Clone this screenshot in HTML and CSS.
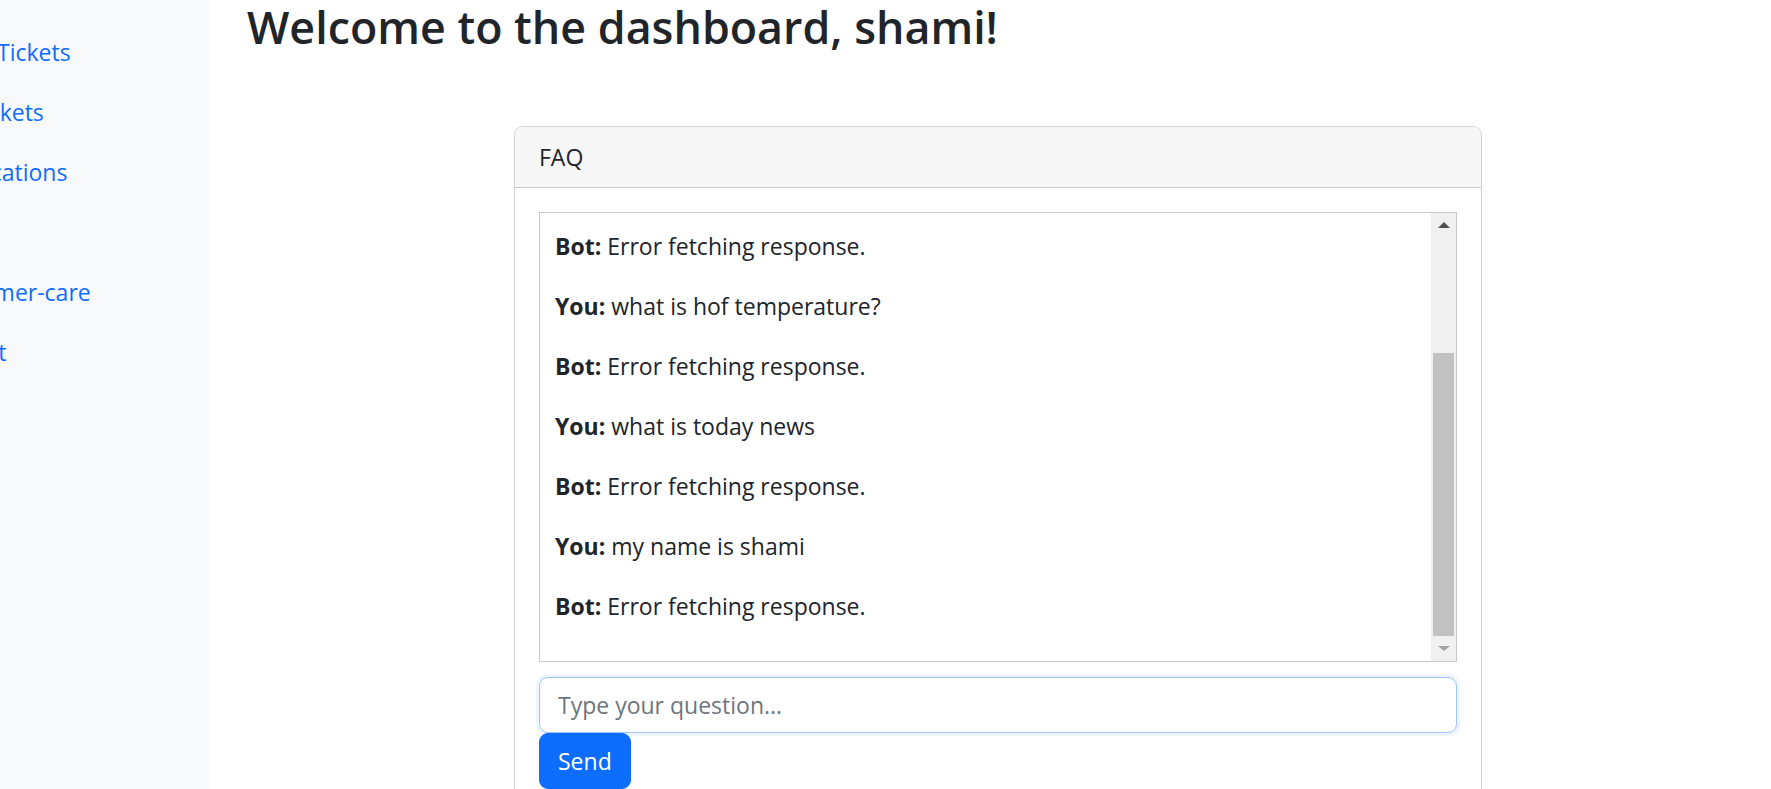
FILE: index.html
```html
<!DOCTYPE html>
<html lang="en">
<head>
<meta charset="utf-8">
<title>Dashboard</title>
<link rel="stylesheet" href="styles.css">
</head>
<body>
<div class="layout">
  <aside class="sidebar">
    <nav class="side-nav">
      <a href="#" class="side-link">Open Tickets</a>
      <a href="#" class="side-link">My Tickets</a>
      <a href="#" class="side-link">Notifications</a>
      <a href="#" class="side-link">FAQ</a>
      <a href="#" class="side-link">Customer-care</a>
      <a href="#" class="side-link">Logout</a>
    </nav>
  </aside>
  <main class="main">
    <h1 class="title">Welcome to the dashboard, shami!</h1>
    <section class="card">
      <div class="card-header">FAQ</div>
      <div class="card-body">
        <div class="chat">
          <div class="chat-viewport">
            <p class="msg"><strong>Bot:</strong> Error fetching response.</p>
            <p class="msg"><strong>You:</strong> what is hof temperature?</p>
            <p class="msg"><strong>Bot:</strong> Error fetching response.</p>
            <p class="msg"><strong>You:</strong> what is today news</p>
            <p class="msg"><strong>Bot:</strong> Error fetching response.</p>
            <p class="msg"><strong>You:</strong> my name is shami</p>
            <p class="msg"><strong>Bot:</strong> Error fetching response.</p>
          </div>
          <div class="scrollbar" aria-hidden="true">
            <div class="sb-btn"><span class="arrow-up"></span></div>
            <div class="sb-track"><div class="sb-thumb"></div></div>
            <div class="sb-btn"><span class="arrow-down"></span></div>
          </div>
        </div>
        <input class="question" type="text" placeholder="Type your question...">
        <button class="send-btn" type="button">Send</button>
      </div>
    </section>
  </main>
</div>
</body>
</html>
```
FILE: styles.css
```css
html, body {
  margin: 0;
  overflow: hidden;
}

body {
  font-family: "Open Sans", "Noto Sans", sans-serif;
  font-size: 23px;
  line-height: 36px;
  color: #212529;
  background: #fff;
}

.layout {
  display: flex;
  min-height: 100vh;
}

.sidebar {
  width: 209px;
  flex: none;
  background: #f8f9fa;
  overflow: hidden;
  padding-top: 22px;
}

.side-nav {
  display: flex;
  flex-direction: column;
  margin-left: -92px;
}

.side-link {
  display: block;
  padding: 12px 24px;
  color: #0d6efd;
  text-decoration: none;
  white-space: nowrap;
}

.main {
  flex: 1;
  padding-left: 38px;
}

.title {
  margin: 0 0 12px;
  font-size: 44.8px;
  font-weight: 600;
  line-height: 1.2;
  color: #212529;
}

.card {
  width: 968px;
  box-sizing: border-box;
  margin: 72px 0 0 267px;
  border: 1px solid rgba(0, 0, 0, 0.175);
  border-radius: 9px;
  background: #fff;
}

.card-header {
  padding: 12px 24px;
  background: #f7f7f7;
  border-bottom: 1px solid rgba(0, 0, 0, 0.175);
  border-radius: 8px 8px 0 0;
}

.card-body {
  padding: 24px;
}

.chat {
  height: 450px;
  box-sizing: border-box;
  border: 1px solid #c9c9c9;
  display: flex;
}

.chat-viewport {
  flex: 1;
  min-width: 0;
  overflow: hidden;
  padding: 15px;
}

.msg {
  margin: 0 0 24px;
}

.msg strong {
  font-weight: 700;
}

.scrollbar {
  width: 25px;
  flex: none;
  display: flex;
  flex-direction: column;
  background: #f0f0f0;
}

.sb-btn {
  height: 25px;
  flex: none;
  display: flex;
  align-items: center;
  justify-content: center;
}

.arrow-up {
  width: 0;
  height: 0;
  border-left: 6px solid transparent;
  border-right: 6px solid transparent;
  border-bottom: 6px solid #505050;
}

.arrow-down {
  width: 0;
  height: 0;
  border-left: 6px solid transparent;
  border-right: 6px solid transparent;
  border-top: 5px solid #a3a3a3;
}

.sb-track {
  flex: 1;
  display: flex;
  flex-direction: column;
  justify-content: flex-end;
  padding: 0 2px;
}

.sb-thumb {
  height: 283px;
  background: #c1c1c1;
}

.question {
  display: block;
  width: 100%;
  box-sizing: border-box;
  margin: 15px 0 0;
  padding: 9px 18px;
  font: inherit;
  line-height: 36px;
  color: #212529;
  border: 1px solid #9fc5fb;
  border-radius: 9px;
  box-shadow: 0 0 0 3px rgba(13, 110, 253, 0.07);
  outline: none;
}

.question::placeholder {
  color: #6c757d;
}

.send-btn {
  display: block;
  margin: 0;
  padding: 9px 18px;
  font: inherit;
  line-height: 36px;
  color: #fff;
  background: #0d6efd;
  border: 1px solid #0d6efd;
  border-radius: 9px;
}
```
